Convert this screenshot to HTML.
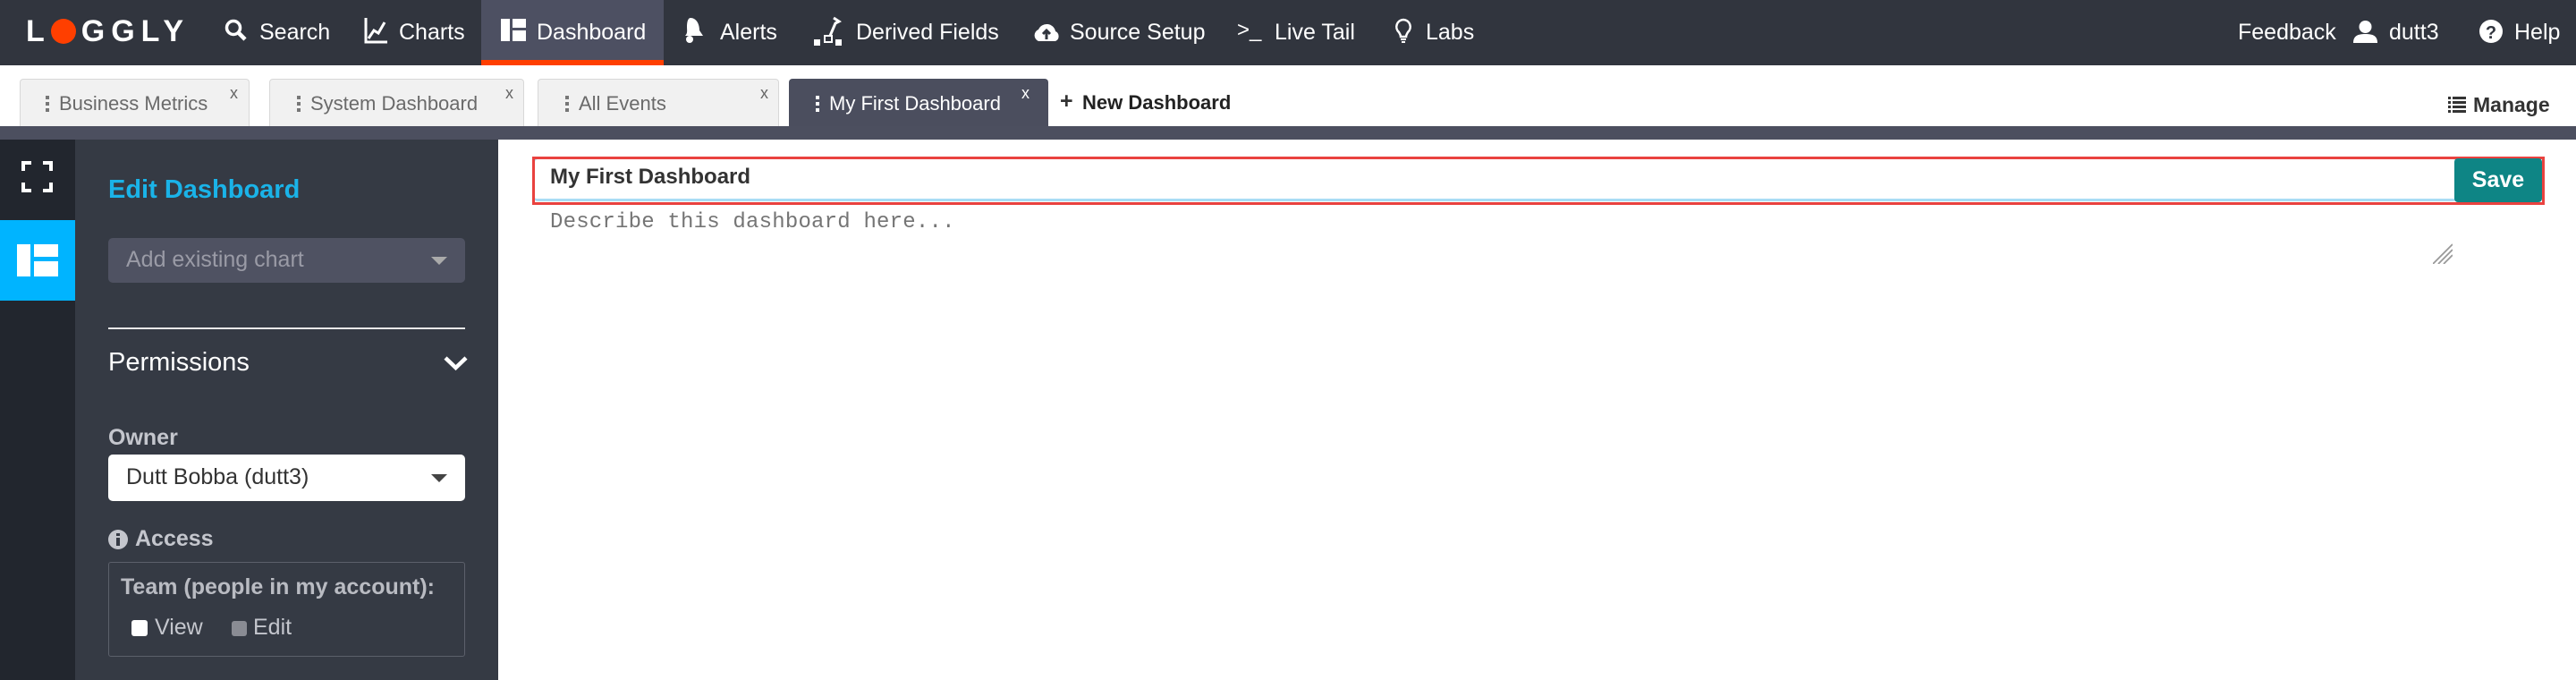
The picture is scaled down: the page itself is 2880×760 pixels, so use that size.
<!DOCTYPE html>
<html><head><meta charset="utf-8"><style>
*{box-sizing:border-box;margin:0;padding:0}
body{width:2880px;height:760px;overflow:hidden;background:#fff;font-family:"Liberation Sans",sans-serif;position:relative}
.a{position:absolute;white-space:nowrap}
.nav{left:0;top:0;width:2880px;height:73px;background:#31353e}
.nt{color:#fff;font-size:25px;top:22px}
.tab{top:88px;height:54px;background:#f1f1f1;border:1px solid #d8d8d8;border-bottom:none;border-radius:4px 4px 0 0}
.tt{color:#6a6a6a;font-size:22px;top:103px}
.tx{color:#666;font-size:18px;top:94px}
.dots{width:4px;height:18px;top:107px;background:linear-gradient(#777 0 4px,transparent 4px 7px,#777 7px 11px,transparent 11px 14px,#777 14px 18px)}
</style></head><body>
<div class="a nav"></div>
<div class="a" style="left:538px;top:0;width:204px;height:73px;background:#4d5062"></div>
<div class="a" style="left:538px;top:67px;width:204px;height:6px;background:#ff3f00"></div>
<div class="a" style="left:29px;top:16px;color:#fff;font-size:34px;letter-spacing:7px;font-weight:bold">L<span style="display:inline-block;width:28px;height:28px;border-radius:50%;background:#ff3f00;vertical-align:-3px;margin:0 6px 0 0"></span>GGLY</div>
<svg class="a" style="left:250px;top:20px" width="28" height="28" viewBox="0 0 28 28"><circle cx="11" cy="11" r="7.5" fill="none" stroke="#fff" stroke-width="3.5"/><path d="M16 16l8 8" stroke="#fff" stroke-width="4.5"/></svg>
<div class="a nt" style="left:290px">Search</div>
<svg class="a" style="left:406px;top:18px" width="28" height="32"><path d="M3 2v27h24M6 25l6-9 5 3 7-12" fill="none" stroke="#fff" stroke-width="3"/></svg>
<div class="a nt" style="left:446px">Charts</div>
<svg class="a" style="left:560px;top:21px" width="28" height="25"><rect x="0" y="0" width="10" height="25" fill="#fff"/><rect x="13" y="0" width="15" height="10" fill="#fff"/><rect x="13" y="13" width="15" height="12" fill="#fff"/></svg>
<div class="a nt" style="left:600px">Dashboard</div>
<svg class="a" style="left:764px;top:18px" width="24" height="32"><path d="M8 2c6 0 10 6 10 14l4 6-20 0c3-3 2-6 2-10 0-5 1-10 4-10z" fill="#fff"/><circle cx="7" cy="26" r="4" fill="#fff"/></svg>
<div class="a nt" style="left:805px">Alerts</div>
<svg class="a" style="left:910px;top:18px" width="34" height="34"><path d="M22 2l6 4-4 2-6 14" fill="none" stroke="#fff" stroke-width="3"/><rect x="0" y="26" width="7" height="7" fill="#fff"/><rect x="12" y="22" width="8" height="7" fill="none" stroke="#fff" stroke-width="2"/><rect x="24" y="26" width="7" height="7" fill="#fff"/></svg>
<div class="a nt" style="left:957px">Derived Fields</div>
<svg class="a" style="left:1153px;top:22px" width="34" height="26"><path d="M8 24a7 7 0 0 1 0-13 10 10 0 0 1 19 2 6 6 0 0 1 0 11z" fill="#fff"/><path d="M17 22v-9M13 16l4-4 4 4" stroke="#31353e" stroke-width="3" fill="none"/></svg>
<div class="a nt" style="left:1196px">Source Setup</div>
<div class="a nt" style="left:1383px;top:20px;font-size:24px">&gt;_</div>
<div class="a nt" style="left:1425px">Live Tail</div>
<svg class="a" style="left:1558px;top:20px" width="22" height="30"><path d="M11 2a8 8 0 0 0-5 14c1 2 2 3 2 5h6c0-2 1-3 2-5a8 8 0 0 0-5-14z" fill="none" stroke="#fff" stroke-width="2.5"/><path d="M8 24h6M9 27h4" stroke="#fff" stroke-width="2"/></svg>
<div class="a nt" style="left:1594px">Labs</div>
<div class="a nt" style="left:2502px">Feedback</div>
<svg class="a" style="left:2631px;top:22px" width="27" height="26"><circle cx="13.5" cy="8" r="7" fill="#fff"/><path d="M0 26c0-8 5-10 13.5-10S27 18 27 26z" fill="#fff"/></svg>
<div class="a nt" style="left:2671px">dutt3</div>
<svg class="a" style="left:2772px;top:22px" width="26" height="26"><circle cx="13" cy="13" r="13" fill="#fff"/><text x="13" y="21" text-anchor="middle" font-size="20" font-weight="bold" fill="#31353e" font-family="Liberation Sans">?</text></svg>
<div class="a nt" style="left:2811px">Help</div>

<div class="a tab" style="left:22px;width:257px"></div>
<div class="a dots" style="left:51px"></div><div class="a tt" style="left:66px">Business Metrics</div><div class="a tx" style="left:257px">x</div>
<div class="a tab" style="left:301px;width:285px"></div>
<div class="a dots" style="left:332px"></div><div class="a tt" style="left:347px">System Dashboard</div><div class="a tx" style="left:565px">x</div>
<div class="a tab" style="left:601px;width:270px"></div>
<div class="a dots" style="left:632px"></div><div class="a tt" style="left:647px">All Events</div><div class="a tx" style="left:850px">x</div>
<div class="a tab" style="left:882px;width:290px;background:#4b4e5e;border-color:#4b4e5e"></div>
<div class="a dots" style="left:912px;background:linear-gradient(#fff 0 4px,transparent 4px 7px,#fff 7px 11px,transparent 11px 14px,#fff 14px 18px)"></div><div class="a tt" style="left:927px;color:#fff">My First Dashboard</div><div class="a tx" style="left:1142px;color:#fff">x</div>
<div class="a" style="left:1185px;top:99px;font-size:25px;font-weight:bold;color:#333">+</div>
<div class="a" style="left:1210px;top:102px;font-size:22px;font-weight:bold;color:#222">New Dashboard</div>
<svg class="a" style="left:2737px;top:108px" width="20" height="18"><g fill="#333"><rect x="0" y="0" width="3" height="3"/><rect x="5" y="0" width="15" height="3"/><rect x="0" y="5" width="3" height="3"/><rect x="5" y="5" width="15" height="3"/><rect x="0" y="10" width="3" height="3"/><rect x="5" y="10" width="15" height="3"/><rect x="0" y="15" width="3" height="3"/><rect x="5" y="15" width="15" height="3"/></g></svg>
<div class="a" style="left:2765px;top:104px;font-size:23px;font-weight:bold;color:#333">Manage</div>
<div class="a" style="left:0;top:141px;width:2880px;height:15px;background:#4c4f5f"></div>

<div class="a" style="left:0;top:156px;width:84px;height:604px;background:#22262e"></div>
<svg class="a" style="left:24px;top:180px" width="35" height="35"><path d="M2 11V2h9M24 2h9v9M33 24v9h-9M11 33H2v-9" fill="none" stroke="#fff" stroke-width="4"/></svg>
<div class="a" style="left:0;top:246px;width:84px;height:90px;background:#00b4ff"></div>
<svg class="a" style="left:19px;top:273px" width="46" height="36"><rect x="0" y="0" width="15" height="36" fill="#fff"/><rect x="19" y="0" width="27" height="14" fill="#fff"/><rect x="19" y="19" width="27" height="17" fill="#fff"/></svg>
<div class="a" style="left:84px;top:156px;width:473px;height:604px;background:#353a44"></div>
<div class="a" style="left:121px;top:196px;font-size:29px;font-weight:bold;color:#1ab3e8">Edit Dashboard</div>
<div class="a" style="left:121px;top:266px;width:399px;height:50px;background:#4f5262;border-radius:5px"></div>
<div class="a" style="left:141px;top:276px;font-size:25px;color:#9a9ba6">Add existing chart</div>
<div class="a" style="left:482px;top:287px;border:9px solid transparent;border-top:9px solid #aaa;border-bottom:none;width:0"></div>
<div class="a" style="left:121px;top:366px;width:399px;height:2px;background:#e8e8e8"></div>
<div class="a" style="left:121px;top:389px;font-size:29px;color:#fff">Permissions</div>
<svg class="a" style="left:496px;top:397px" width="27" height="18"><path d="M2 3l11.5 11 11.5-11" fill="none" stroke="#fff" stroke-width="4.5"/></svg>
<div class="a" style="left:121px;top:475px;font-size:25px;font-weight:bold;color:#c4c6cd">Owner</div>
<div class="a" style="left:121px;top:508px;width:399px;height:52px;background:#fff;border-radius:5px"></div>
<div class="a" style="left:141px;top:519px;font-size:25px;color:#333">Dutt Bobba (dutt3)</div>
<div class="a" style="left:482px;top:530px;border:9px solid transparent;border-top:9px solid #444;border-bottom:none;width:0"></div>
<svg class="a" style="left:121px;top:592px" width="22" height="22"><circle cx="11" cy="11" r="11" fill="#c4c6cd"/><rect x="9" y="9" width="4" height="9" fill="#353a44"/><rect x="9" y="4" width="4" height="3" fill="#353a44"/></svg>
<div class="a" style="left:151px;top:588px;font-size:25px;font-weight:bold;color:#c4c6cd">Access</div>
<div class="a" style="left:121px;top:628px;width:399px;height:106px;border:1px solid #5c606b;border-radius:3px"></div>
<div class="a" style="left:135px;top:642px;font-size:25px;font-weight:bold;color:#b9bbc2">Team (people in my account):</div>
<div class="a" style="left:147px;top:693px;width:18px;height:18px;background:#fff;border-radius:3px"></div>
<div class="a" style="left:173px;top:687px;font-size:25px;color:#c4c6cd">View</div>
<div class="a" style="left:259px;top:694px;width:17px;height:17px;background:#8a8c94;border-radius:3px"></div>
<div class="a" style="left:283px;top:687px;font-size:25px;color:#c4c6cd">Edit</div>

<div class="a" style="left:597px;top:177px;width:2150px;height:48px;border:1px solid #9fd8f4;border-bottom:3px solid #a9dcf5;border-radius:4px"></div>
<div class="a" style="left:595px;top:175px;width:2250px;height:54px;border:3px solid #e9423f"></div>
<div class="a" style="left:615px;top:184px;font-size:24px;font-weight:bold;color:#333">My First Dashboard</div>
<div class="a" style="left:2744px;top:177px;width:98px;height:49px;background:#0e8585;border-radius:4px;color:#fff;font-weight:bold;font-size:25px;text-align:center;line-height:49px">Save</div>
<div class="a" style="left:615px;top:235px;font-family:'Liberation Mono',monospace;font-size:24px;letter-spacing:0.2px;color:#757575">Describe this dashboard here...</div>
<svg class="a" style="left:2720px;top:271px" width="22" height="24"><path d="M0 24L22 2M6 24L22 8M12 24L22 14" stroke="#999" stroke-width="1.8"/></svg>
</body></html>
